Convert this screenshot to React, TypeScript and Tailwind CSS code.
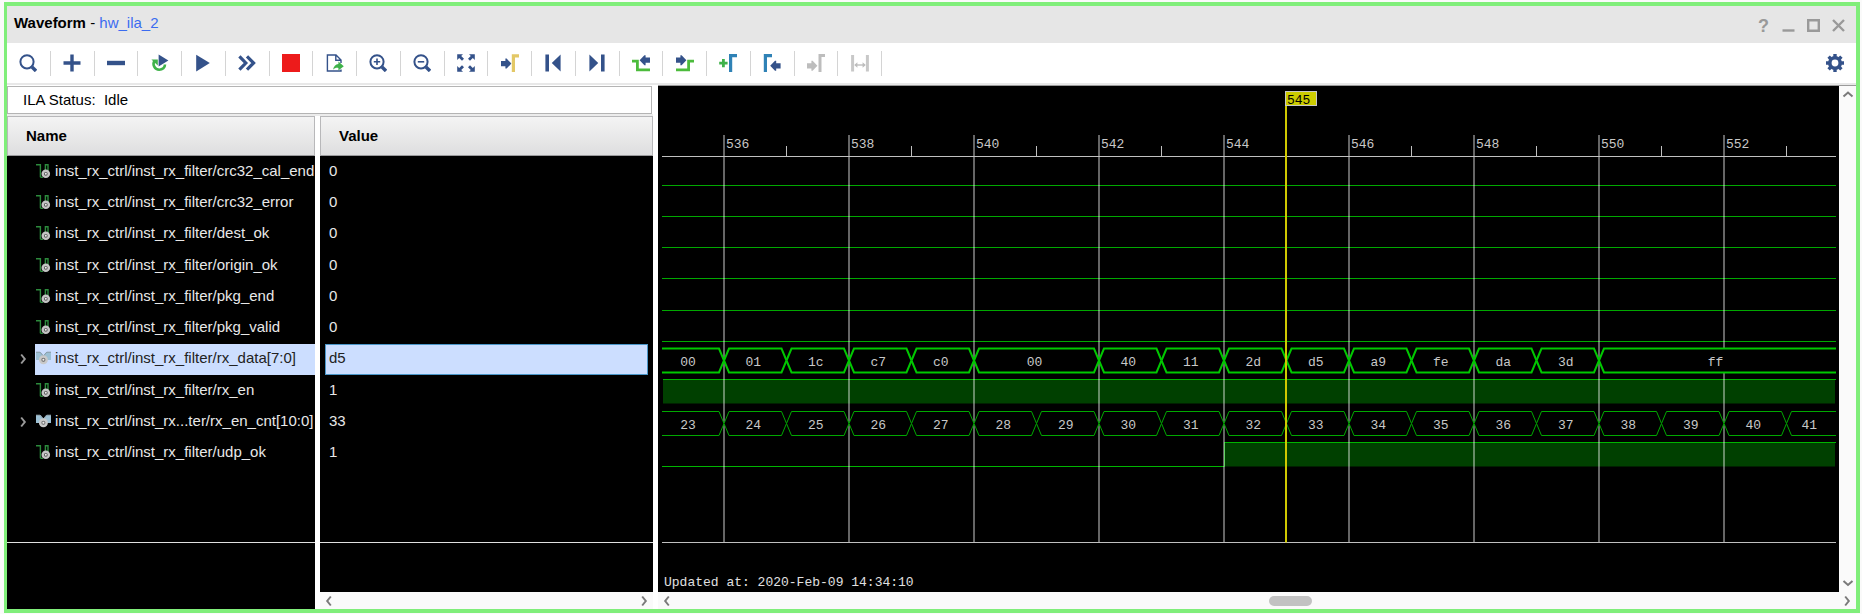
import type { ReactNode } from "react";

const NAVY = "#34528a";
const GREEN = "#3fb24a";
const BLUE = "#2f82b6";
const GREY = "#bdbdbd";

type Signal = { name: string; value: string; bus?: boolean; selected?: boolean };

const signals: Signal[] = [
  { name: "inst_rx_ctrl/inst_rx_filter/crc32_cal_end", value: "0" },
  { name: "inst_rx_ctrl/inst_rx_filter/crc32_error", value: "0" },
  { name: "inst_rx_ctrl/inst_rx_filter/dest_ok", value: "0" },
  { name: "inst_rx_ctrl/inst_rx_filter/origin_ok", value: "0" },
  { name: "inst_rx_ctrl/inst_rx_filter/pkg_end", value: "0" },
  { name: "inst_rx_ctrl/inst_rx_filter/pkg_valid", value: "0" },
  { name: "inst_rx_ctrl/inst_rx_filter/rx_data[7:0]", value: "d5", bus: true, selected: true },
  { name: "inst_rx_ctrl/inst_rx_filter/rx_en", value: "1" },
  { name: "inst_rx_ctrl/inst_rx...ter/rx_en_cnt[10:0]", value: "33", bus: true },
  { name: "inst_rx_ctrl/inst_rx_filter/udp_ok", value: "1" },
];

/* ---------- icons ---------- */

function Svg({ children }: { children: ReactNode }) {
  return (
    <svg width="18" height="18" viewBox="0 0 18 18" fill="none" aria-hidden="true">
      {children}
    </svg>
  );
}

function Lens({ children }: { children?: ReactNode }) {
  return (
    <Svg>
      <circle cx="8" cy="7.8" r="6.6" stroke={NAVY} strokeWidth="2" />
      <path d="M13 13 L17 17" stroke={NAVY} strokeWidth="3.4" />
      {children}
    </Svg>
  );
}

const arrowRight = "M0 6.4 H4.4 V4 H5.6 L10.4 9 L5.6 14 H4.4 V11.6 H0 Z";
const arrowLeft = "M10.4 6.4 H6 V4 H4.8 L0 9 L4.8 14 H6 V11.6 H10.4 Z";

const tools: { label: string; icon: ReactNode; disabled?: boolean }[] = [
  { label: "Search", icon: <Lens /> },
  { label: "Add", icon: <Svg><path d="M9 0.5 V17.5 M0.5 9 H17.5" stroke={NAVY} strokeWidth="3.4" /></Svg> },
  { label: "Remove", icon: <Svg><path d="M0 9 H18" stroke={NAVY} strokeWidth="4.4" /></Svg> },
  {
    label: "Run trigger repeatedly",
    icon: (
      <Svg>
        <path d="M3.4 7 C1.2 10.5 3.6 15.8 8.2 15.8 C11.6 15.8 14 13.6 14 10.6" stroke={GREEN} strokeWidth="2.6" />
        <path d="M0.4 5.6 H6.8 V11.6 Z" fill={GREEN} />
        <path d="M7.6 0.6 V12.4 L17.4 6.4 Z" fill={NAVY} />
      </Svg>
    ),
  },
  { label: "Run trigger", icon: <Svg><path d="M2.2 0.8 V17.4 L15.8 9.1 Z" fill={NAVY} /></Svg> },
  {
    label: "Run trigger immediate",
    icon: <Svg><path d="M1.4 2.4 L7.8 9 L1.4 15.6 M9 2.4 L15.6 9 L9 15.6" stroke={NAVY} strokeWidth="3.2" /></Svg>,
  },
  { label: "Stop trigger", icon: <Svg><rect width="18" height="18" fill="#ed1b1b" /></Svg> },
  {
    label: "Export data",
    icon: (
      <Svg>
        <path d="M15 9 V6 L10 1 H1.4 V17 H15 V15.6 M9.8 1 V6.2 H15" stroke={NAVY} strokeWidth="1.4" />
        <path d="M7 15.8 C7.6 12.4 9.6 10.2 12.4 10 V7.6 L17.8 12.2 L12.4 16.6 V14 C10.4 13.6 8.8 14 7 15.8 Z" fill={GREEN} />
      </Svg>
    ),
  },
  { label: "Zoom in", icon: <Lens><path d="M8 4.6 V11 M4.8 7.8 H11.2" stroke={NAVY} strokeWidth="1.6" /></Lens> },
  { label: "Zoom out", icon: <Lens><path d="M4.8 7.8 H11.2" stroke={NAVY} strokeWidth="1.6" /></Lens> },
  {
    label: "Zoom fit",
    icon: (
      <Svg>
        <path
          d="M0.2 0.2 H6 L4.2 2 L7 4.8 L5 6.8 L2.2 4 L0.2 6 Z M17.8 0.2 V6 L15.8 4 L13 6.8 L11 4.8 L13.8 2 L12 0.2 Z M0.2 17.8 V12 L2.2 14 L5 11.2 L7 13.2 L4.2 16 L6 17.8 Z M17.8 17.8 H12 L13.8 16 L11 13.2 L13 11.2 L15.8 14 L17.8 12 Z"
          fill={NAVY}
        />
      </Svg>
    ),
  },
  {
    label: "Go to cursor",
    icon: (
      <Svg>
        <path d={arrowRight} fill={NAVY} transform="translate(0 0.6)" />
        <path d="M12.4 18 V1.8 H18" stroke="#e3c866" strokeWidth="3.2" />
      </Svg>
    ),
  },
  { label: "Go to start", icon: <Svg><path d="M1.4 0.6 H5 V17.4 H1.4 Z M16.6 0.6 V17.4 L7.8 9 Z" fill={NAVY} /></Svg> },
  { label: "Go to end", icon: <Svg><path d="M13 0.6 H16.6 V17.4 H13 Z M1.4 0.6 V17.4 L10.2 9 Z" fill={NAVY} /></Svg> },
  {
    label: "Previous transition",
    icon: (
      <Svg>
        <path d="M0 7.2 H5.4 V15.8 H18" stroke="#4cbb3c" strokeWidth="2.8" />
        <path d={arrowLeft} fill={NAVY} transform="translate(7.6 -2.8)" />
      </Svg>
    ),
  },
  {
    label: "Next transition",
    icon: (
      <Svg>
        <path d="M0 15.8 H12.6 V7.2 H18" stroke="#4cbb3c" strokeWidth="2.8" />
        <path d={arrowRight} fill={NAVY} transform="translate(0 -2.8)" />
      </Svg>
    ),
  },
  {
    label: "Add marker",
    icon: (
      <Svg>
        <path d="M4.4 5 V13.2 M0.2 9.1 H8.6" stroke={GREEN} strokeWidth="2.8" />
        <path d="M11.6 18 V1.6 H18" stroke={BLUE} strokeWidth="3.2" />
      </Svg>
    ),
  },
  {
    label: "Previous marker",
    icon: (
      <Svg>
        <path d="M2.4 18 V1.6 H9" stroke={BLUE} strokeWidth="3.2" />
        <path d={arrowLeft} fill={NAVY} transform="translate(7.2 2.8)" />
      </Svg>
    ),
  },
  {
    label: "Next marker",
    disabled: true,
    icon: (
      <Svg>
        <path d={arrowRight} fill={GREY} transform="translate(0 2.8)" />
        <path d="M13 18 V1.6 H18" stroke={GREY} strokeWidth="3" />
      </Svg>
    ),
  },
  {
    label: "Swap cursors",
    disabled: true,
    icon: (
      <Svg>
        <path d="M1.6 1 V17.4 M16.4 1 V17.4" stroke="#c8c8c8" strokeWidth="3" />
        <path d="M4 11 H14" stroke={GREY} strokeWidth="1.4" />
        <path d="M3.2 11 L6.4 8.2 V13.8 Z M14.8 11 L11.6 8.2 V13.8 Z" fill={GREY} />
      </Svg>
    ),
  },
];

function GearIcon() {
  return (
    <Svg>
      <circle cx="9" cy="9" r="5.2" stroke={NAVY} strokeWidth="3.6" />
      <path
        d="M9 0 V3 M9 15 V18 M0 9 H3 M15 9 H18 M2.6 2.6 L4.7 4.7 M13.3 13.3 L15.4 15.4 M15.4 2.6 L13.3 4.7 M4.7 13.3 L2.6 15.4"
        stroke={NAVY}
        strokeWidth="3.4"
      />
    </Svg>
  );
}

function ScalarIcon() {
  return (
    <svg className="shrink-0" width="15" height="16" viewBox="0 0 15 16" fill="none" aria-hidden="true">
      <path d="M0 1.7 H4.4 V14.3 M9.4 8 V1.7 H12 V8" stroke="#2c8a3c" strokeWidth="1.4" />
      <path d="M4.4 14.3 H7" stroke="#2c8a3c" strokeWidth="1.4" />
      <circle cx="9.8" cy="10.8" r="3.1" stroke="#c4c4c4" strokeWidth="2.4" fill="#555" />
      <circle cx="9.8" cy="10.8" r="1" fill="#eee" />
    </svg>
  );
}

function BusIcon() {
  return (
    <svg className="shrink-0" width="15" height="16" viewBox="0 0 15 16" fill="none" aria-hidden="true">
      <path d="M0 2 H4.6 L7.4 5.4 L10.2 2 H15 V10 H10.2 L7.4 7 L4.6 10 H0 Z" fill="#9cc0d4" />
      <path d="M0 2.2 H4 L7.4 6 L10.8 2.2 H15" stroke="#8a9aa4" strokeWidth="1" />
      <circle cx="7.4" cy="9.8" r="3.3" stroke="#c9c9c9" strokeWidth="2.4" fill="#777" />
      <circle cx="7.4" cy="9.8" r="1" fill="#eee" />
    </svg>
  );
}

function Chevron({ dir, color = "#7a7a7a" }: { dir: "up" | "down" | "left" | "right"; color?: string }) {
  const paths = {
    up: "M1.5 7.5 L6 3.5 L10.5 7.5",
    down: "M1.5 4 L6 8 L10.5 4",
    left: "M7.8 1.5 L4.2 6 L7.8 10.5",
    right: "M4.2 1.5 L7.8 6 L4.2 10.5",
  };
  return (
    <svg width="12" height="12" viewBox="0 0 12 12" fill="none" aria-hidden="true">
      <path d={paths[dir]} stroke={color} strokeWidth="2" />
    </svg>
  );
}

/* ---------- waveform ---------- */

const UNIT = 62.5;
const X0 = 4;
const X1 = 1178;
const AXIS_Y = 70.5;
const END_Y = 456.5;
const AMP = 24;
const CURSOR = 545;
const timeX = (t: number) => 66 + (t - 536) * UNIT;
const lowY = (row: number) => 99.5 + Math.floor(row * 31.25);

const majors = [536, 538, 540, 542, 544, 546, 548, 550, 552];

const rxData: [number, string][] = [
  [535, "00"], [536, "01"], [537, "1c"], [538, "c7"], [539, "c0"], [540, "00"], [542, "40"], [543, "11"],
  [544, "2d"], [545, "d5"], [546, "a9"], [547, "fe"], [548, "da"], [549, "3d"], [550, "ff"],
];
const rxCount: [number, string][] = Array.from({ length: 19 }, (_, i) => [535 + i, String(23 + i)]);

function Bus({ row, data, bold }: { row: number; data: [number, string][]; bold?: boolean }) {
  const bottom = lowY(row);
  const top = bottom - AMP;
  const mid = (top + bottom) / 2;
  return (
    <g>
      {data.map(([t, text], i) => {
        const first = i === 0;
        const last = i === data.length - 1;
        const a = first ? X0 : timeX(t);
        const b = last ? X1 : timeX(data[i + 1][0]);
        const left = first ? `M${a} ${bottom} M${a} ${top}` : `M${a} ${mid} L${a + 5} ${top}`;
        const right = last ? `L${b} ${top} M${b} ${bottom}` : `L${b - 5} ${top} L${b} ${mid} L${b - 5} ${bottom}`;
        const close = first ? `L${a} ${bottom}` : `L${a + 5} ${bottom} L${a} ${mid}`;
        const labelX = (a + b) / 2 - (first ? 5 : 2);
        return (
          <g key={t}>
            <path
              d={`M${first ? a : a + 5} ${top} L${last ? b : b - 5} ${top} L${b} ${mid} L${last ? b : b - 5} ${bottom} L${first ? a : a + 5} ${bottom} L${a} ${mid} Z`}
              fill="#000"
            />
            <path d={`${left} ${right} ${close}`} fill="none" stroke={bold ? "#00c800" : "#00a800"} strokeWidth={bold ? 2 : 1} />
            <text x={labelX} y={mid + 5} textAnchor="middle" fill="#c8c8c8">
              {text}
            </text>
          </g>
        );
      })}
    </g>
  );
}

function High({ row, from }: { row: number; from: number }) {
  const bottom = lowY(row);
  const top = bottom - AMP;
  return (
    <g>
      <rect x={from} y={top} width={X1 - from - 1} height={AMP} fill="#004000" />
      <path d={`M${from} ${top} H${X1}`} stroke="#00b400" strokeWidth="1" />
    </g>
  );
}

function Waveform() {
  return (
    <svg
      className="block h-full w-full font-['Liberation_Mono',monospace] text-[13px]"
      role="img"
      aria-label="Waveform of rx filter signals"
    >
      {[0, 1, 2, 3, 4, 5].map((row) => (
        <path key={row} d={`M${X0} ${lowY(row)} H${X1}`} stroke="#00a800" />
      ))}
      <High row={7} from={5} />
      <High row={9} from={timeX(544)} />
      <path d={`M${X0} ${lowY(9)} H${timeX(544) + 0.5} V${lowY(9) - AMP}`} fill="none" stroke="#00b400" />
      {majors.map((t) => (
        <g key={t}>
          <path d={`M${timeX(t)} 49 V${END_Y}`} stroke="#fff" strokeOpacity="0.4" strokeWidth="2" />
          {t + 1 !== CURSOR && <path d={`M${timeX(t + 1)} 60 V${AXIS_Y}`} stroke="#c0c0c0" />}
          <text x={timeX(t) + 2} y="62" fill="#c8c8c8">
            {t}
          </text>
        </g>
      ))}
      <path d={`M${X0} ${AXIS_Y} H${X1} M${X0} ${END_Y} H${X1}`} stroke="#c0c0c0" />
      <Bus row={6} data={rxData} bold />
      <Bus row={8} data={rxCount} />
      <path d="M628 18 V456.5" stroke="#cfc800" strokeWidth="2" />
      <rect x="627.5" y="5.5" width="31" height="14" fill="#cccc00" stroke="#c8c8c8" />
      <text x="629" y="18" fill="#000">
        {CURSOR}
      </text>
      <text x="6" y="500" fill="#e0e0e0">
        Updated at: 2020-Feb-09 14:34:10
      </text>
    </svg>
  );
}

/* ---------- panels ---------- */

const headClass =
  "h-10 border border-b-[#9a9a9c] border-[#b8b8ba] bg-linear-to-b from-[#f4f4f4] to-[#dededf] py-0 pl-[18px] text-left font-bold text-black";

function NamePanel() {
  return (
    <div className="flex w-[308px] shrink-0 flex-col overflow-hidden bg-black">
      <table className="w-full table-fixed border-separate border-spacing-0">
        <thead>
          <tr>
            <th className={headClass}>Name</th>
          </tr>
        </thead>
      </table>
      <table className="h-[313px] w-full table-fixed border-collapse" aria-label="Signal names">
        <tbody>
          {signals.map((s) => (
            <tr key={s.name}>
              <td className="p-0">
                <div className="flex h-[31px] items-center">
                  <span className="flex w-7 shrink-0 justify-center pl-1">
                    {s.bus && (
                      <button type="button" aria-label={"Expand " + s.name}>
                        <Chevron dir="right" color="#9a9a9a" />
                      </button>
                    )}
                  </span>
                  <span
                    className={
                      s.selected
                        ? "flex h-full grow items-center gap-1 bg-[#ccdeff] pb-[2px] pl-px text-[#222]"
                        : "flex h-full grow items-center gap-1 pb-[2px] pl-px text-[#e8e8e8]"
                    }
                  >
                    {s.bus ? <BusIcon /> : <ScalarIcon />}
                    <span className="whitespace-nowrap">{s.name}</span>
                  </span>
                </div>
              </td>
            </tr>
          ))}
        </tbody>
      </table>
      <div className="h-[74px] border-b border-[#e0e0e0]" />
    </div>
  );
}

function ValuePanel() {
  return (
    <div className="flex min-w-0 grow flex-col bg-black">
      <table className="w-full table-fixed border-separate border-spacing-0">
        <thead>
          <tr>
            <th className={headClass}>Value</th>
          </tr>
        </thead>
      </table>
      <table className="h-[313px] w-full table-fixed border-collapse" aria-label="Signal values">
        <tbody>
          {signals.map((s) => (
            <tr key={s.name}>
              <td className="px-[5px] py-0">
                <div
                  className={
                    s.selected
                      ? "flex h-[31px] items-center border border-[#4a96c8] bg-[#ccdeff] pb-[2px] pl-[3px] text-[#222]"
                      : "flex h-[31px] items-center pb-[2px] pl-1 text-[#e8e8e8]"
                  }
                >
                  {s.value}
                </div>
              </td>
            </tr>
          ))}
        </tbody>
      </table>
      <div className="h-[74px] border-b border-[#e0e0e0]" />
      <div className="grow" />
      <div className="flex h-[17px] items-center justify-between bg-[#fafafa] px-[3px]">
        <button type="button" aria-label="Scroll values left"><Chevron dir="left" /></button>
        <button type="button" aria-label="Scroll values right"><Chevron dir="right" /></button>
      </div>
    </div>
  );
}

export default function App() {
  return (
    <div className="flex h-screen bg-[#fafafa] pt-[2px] pr-[2px] pb-px pl-1 font-['Liberation_Sans',Arial,sans-serif] text-[15px] leading-5 text-black">
      <main className="flex min-w-0 grow flex-col border-4 border-l-[3px] border-[#80ee7a] bg-white">
        <header className="flex h-[37px] items-center justify-between bg-[#e6e6e6] pr-[11px] pl-[7px]">
          <h1 className="pb-[3px]">
            <b>Waveform</b> - <a href="#hw_ila_2" className="text-[#3b6cf0]">hw_ila_2</a>
          </h1>
          <div className="flex gap-3 pt-[2px] text-[#999]">
            <button type="button" aria-label="Help" className="w-[13px] text-lg leading-3 font-bold">?</button>
            <button type="button" aria-label="Minimize">
              <svg width="13" height="13" viewBox="0 0 13 13"><path d="M0.5 11.5 H12.5" stroke="currentColor" strokeWidth="2.4" /></svg>
            </button>
            <button type="button" aria-label="Maximize">
              <svg width="13" height="13" viewBox="0 0 13 13" fill="none"><path d="M1.2 1.2 H11.8 V11.8 H1.2 Z" stroke="currentColor" strokeWidth="2.4" /></svg>
            </button>
            <button type="button" aria-label="Close">
              <svg width="13" height="13" viewBox="0 0 13 13"><path d="M1 1 L12 12 M12 1 L1 12" stroke="currentColor" strokeWidth="2.4" /></svg>
            </button>
          </div>
        </header>

        <div className="flex h-10 items-center justify-between pr-3">
          <div className="grid w-[875px] grid-cols-20" role="toolbar" aria-label="Waveform tools">
            {tools.map((t) => (
              <button
                key={t.label}
                type="button"
                aria-label={t.label}
                disabled={t.disabled}
                className="flex h-[25px] items-center justify-center border-r border-[#d4d4d4]"
              >
                {t.icon}
              </button>
            ))}
          </div>
          <button type="button" aria-label="Settings"><GearIcon /></button>
        </div>

        <div className="flex min-h-0 grow gap-[5px] border-t-2 border-[#e8e8e8]">
          <section className="flex w-[646px] shrink-0 flex-col">
            <div className="mt-px mr-px h-7 border border-[#b4b4b4] bg-white pl-[15px] leading-[26px]">
              ILA Status:&nbsp; Idle
            </div>
            <div className="h-[2px] bg-[#ececec]" />
            <div className="flex min-h-0 grow gap-[5px]">
              <NamePanel />
              <ValuePanel />
            </div>
          </section>

          <section className="flex min-w-0 grow flex-col border-t border-[#9a9a9a]">
            <div className="flex min-h-0 grow">
              <div className="min-w-0 grow overflow-hidden bg-black">
                <Waveform />
              </div>
              <div className="flex w-[17px] shrink-0 flex-col items-center justify-between bg-[#fafafa] py-[3px]">
                <button type="button" aria-label="Scroll up"><Chevron dir="up" /></button>
                <button type="button" aria-label="Scroll down"><Chevron dir="down" /></button>
              </div>
            </div>
            <div className="flex h-[17px] items-center bg-[#fafafa] px-[3px]">
              <button type="button" aria-label="Scroll left"><Chevron dir="left" /></button>
              <div className="flex grow">
                <div className="w-[51%]" />
                <div className="h-[10px] w-[43px] rounded-full bg-[#c2c2c2]" />
              </div>
              <button type="button" aria-label="Scroll right"><Chevron dir="right" /></button>
            </div>
          </section>
        </div>
      </main>
    </div>
  );
}
